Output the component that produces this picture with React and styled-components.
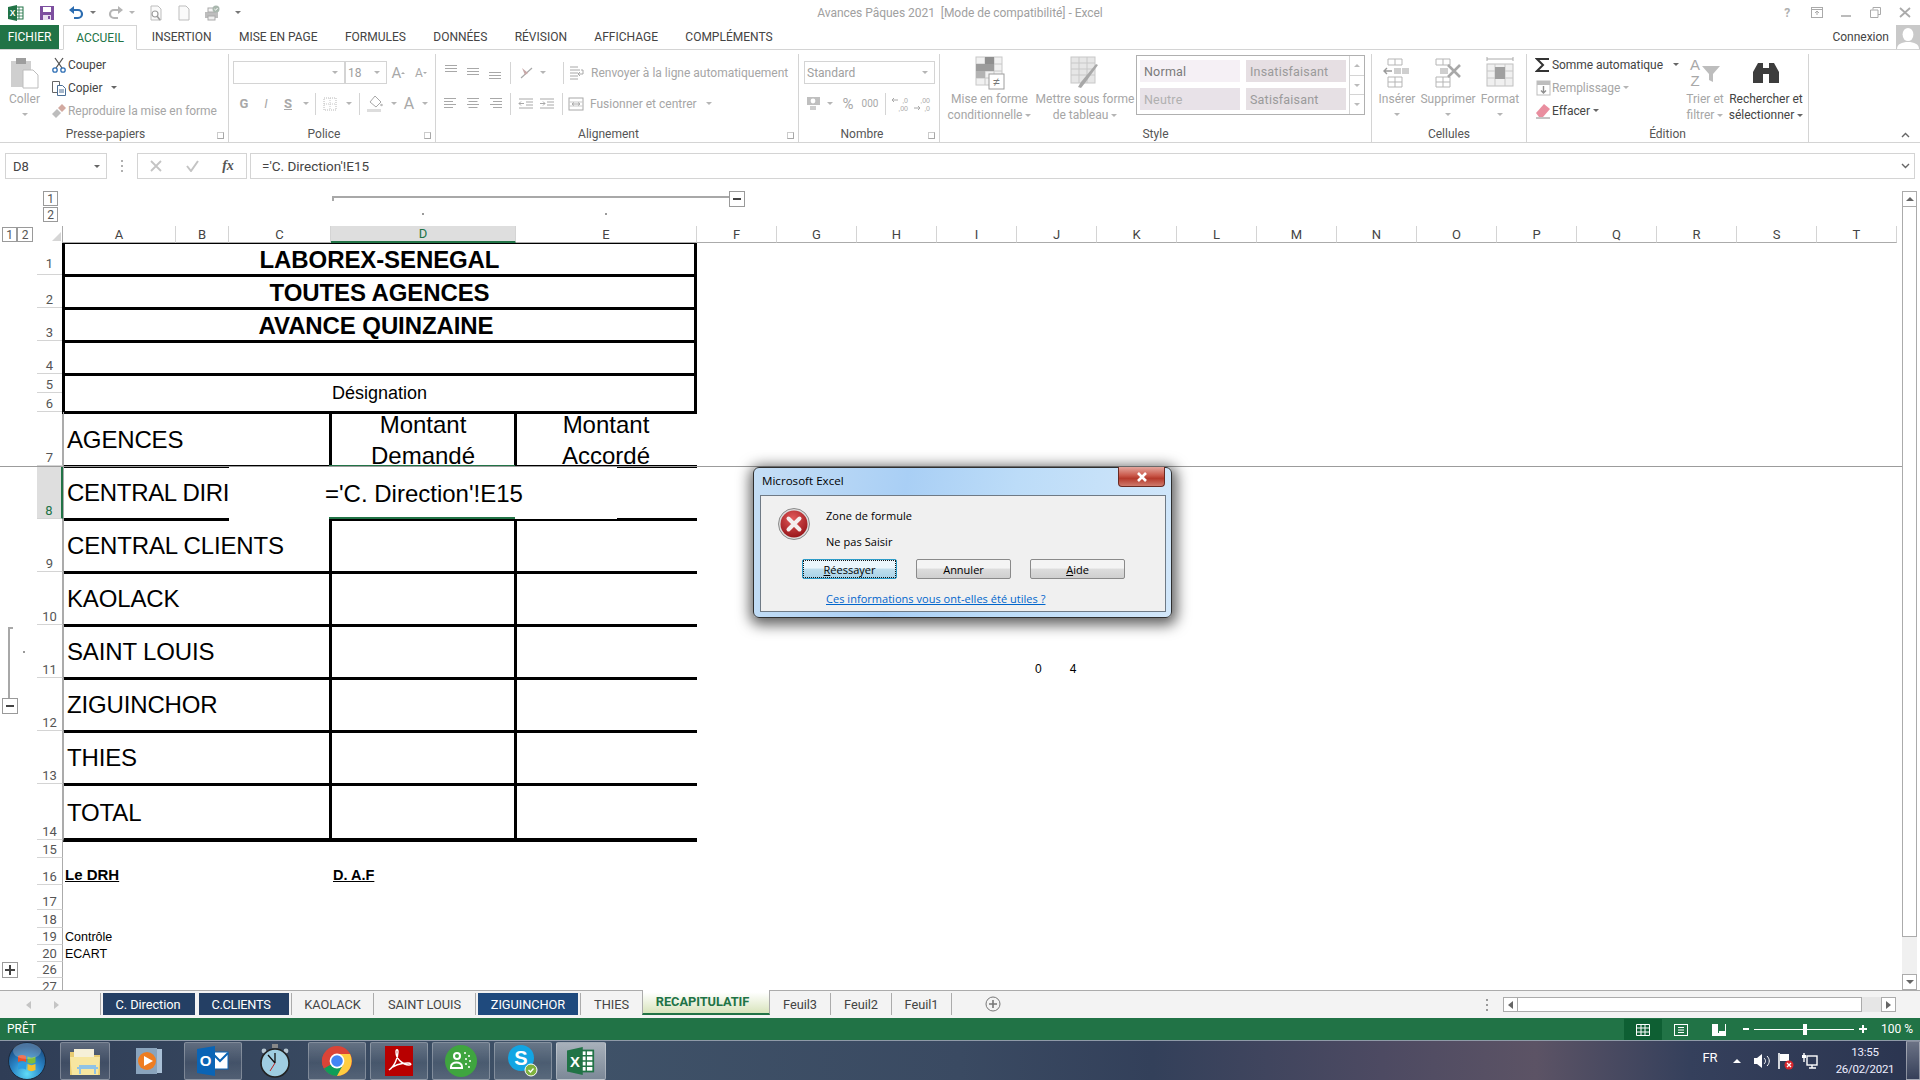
import React from 'react'
import styled, { createGlobalStyle } from 'styled-components'

const GREEN = '#217346'
const MUTED = '#a6a6a6'
const LINE = '#d4d4d4'

const Global = createGlobalStyle`
html,body{margin:0;padding:0;background:#fff;overflow:hidden;}
*{box-sizing:border-box;}
`

const Page = styled.div`
position:relative;
width:1920px;
height:1080px;
overflow:hidden;
display:flex;
flex-direction:column;
background:#fff;
font-family:Roboto,"Open Sans",sans-serif;
font-size:12px;
color:#444;
`

/* ---- title bar ---- */
const TitleBar = styled.div`
height:25px;
display:grid;
grid-template-columns:1fr auto 1fr;
align-items:center;
`
const Qat = styled.div`
display:flex;
align-items:center;
padding-left:7px;
`
const QatSlot = styled.span`
width:${p => p.$w}px;
display:flex;
justify-content:center;
align-items:center;
`
const WindowTitle = styled.div`
color:#a0a0a0;
font-size:12px;
letter-spacing:-.03px;
white-space:pre;
`
const WinBtns = styled.div`
display:flex;
justify-content:flex-end;
align-items:center;
`
const WinSlot = styled.span`
width:29.5px;
display:flex;
justify-content:center;
color:#b0b0b0;
font-weight:${p => (p.$b ? 700 : 400)};
`

/* ---- tabs ---- */
const TabBar = styled.div`
height:25px;
display:flex;
align-items:stretch;
border-bottom:1px solid ${LINE};
`
const FileTab = styled.div`
width:59px;
margin-right:4px;
background:${GREEN};
color:#fff;
display:flex;
align-items:center;
justify-content:center;
`
const RibbonTab = styled.div`
padding:0 13.7px;
display:flex;
align-items:center;
color:${p => (p.$active ? GREEN : '#444')};
white-space:nowrap;
${p => p.$active && `
  width:74px;
  padding:0;
  justify-content:center;
  margin-right:1px;
  border:1px solid ${LINE};
  border-bottom:1px solid #fff;
  height:25px;
`}
`
const Account = styled.div`
margin-left:auto;
display:flex;
align-items:center;
gap:7px;
color:#444;
`

/* ---- ribbon ---- */
const Ribbon = styled.div`
height:93px;
display:flex;
border-bottom:1px solid ${LINE};
position:relative;
`
const Group = styled.section`
width:${p => p.$w}px;
height:88px;
margin-top:4px;
position:relative;
display:flex;
flex-direction:column;
border-right:1px solid ${LINE};
`
const GroupBody = styled.div`
height:72px;
display:flex;
align-items:flex-start;
`
const GroupLabel = styled.div`
margin-top:auto;
height:16px;
line-height:16px;
text-align:center;
color:#555;
padding-right:${p => p.$pr || 0}px;
`
const Launcher = styled.span`
position:absolute;
right:4px;
bottom:3px;
width:7px;
height:7px;
border:1px solid #a8a8a8;
border-top-color:#ccc;
border-left-color:#ccc;
`
const BigBtn = styled.div`
width:${p => p.$w}px;
padding:2px 0 0 ${p => p.$pl || 0}px;
display:flex;
flex-direction:column;
align-items:center;
color:${p => (p.$on ? '#444' : MUTED)};
line-height:16px;
white-space:nowrap;
flex:none;
`
const BigIcon = styled.div`
height:33px;
margin-bottom:2px;
display:flex;
align-items:center;
justify-content:center;
`
const SmallCol = styled.div`
display:flex;
flex-direction:column;
margin-top:-1px;
padding-left:${p => p.$pl || 0}px;
flex:none;
width:${p => p.$w}px;
`
const SmallBtn = styled.div`
height:23px;
display:flex;
align-items:center;
white-space:nowrap;
letter-spacing:-.05px;
color:${p => (p.$on ? '#444' : MUTED)};
`
const SmallIcon = styled.span`
width:${p => p.$w || 19}px;
flex:none;
display:flex;
align-items:center;
justify-content:center;
`
const Caret = styled.i`
display:inline-block;
width:0;
height:0;
margin-left:${p => p.$ml ?? 3}px;
border-left:3px solid transparent;
border-right:3px solid transparent;
border-top:3px solid ${p => p.$c || '#b5b5b5'};
vertical-align:middle;
`
const BigCaret = styled(Caret)`
margin:6px 0 0;
`
const ToolRows = styled.div`
display:flex;
flex-direction:column;
padding:7px 0 0 ${p => p.$pl}px;
gap:8px;
`
const ToolRow = styled.div`
height:23px;
display:flex;
align-items:center;
white-space:nowrap;
color:${MUTED};
`
const ToolText = styled.span`
margin-left:6px;
font-size:12px;
`
const Slot = styled.span`
width:${p => p.$w}px;
flex:none;
height:22px;
display:flex;
align-items:center;
justify-content:center;
color:#a8a8a8;
font-size:${p => p.$fs || 12}px;
font-weight:${p => (p.$b ? 700 : 400)};
font-style:${p => (p.$i ? 'italic' : 'normal')};
text-decoration:${p => (p.$u ? 'underline' : 'none')};
`
const VSep = styled.span`
width:1px;
height:22px;
flex:none;
background:${LINE};
margin:0 ${p => p.$r ?? 4}px 0 ${p => p.$l ?? 4}px;
`
const Select = styled.div`
width:${p => p.$w}px;
height:23px;
border:1px solid ${LINE};
display:flex;
align-items:center;
justify-content:space-between;
padding:0 6px 0 2px;
color:#a0a0a0;
flex:none;
`
const Gallery = styled.div`
width:229px;
height:60px;
margin:1px 0 0 3px;
border:1px solid #b0b0b0;
display:flex;
flex:none;
`
const StyleGrid = styled.div`
flex:1;
display:grid;
grid-template-columns:100px 100px;
grid-template-rows:22px 22px;
gap:6px;
padding:4px 0 0 3px;
`
const StyleCell = styled.div`
background:${p => p.$bg};
color:${p => p.$c};
display:flex;
align-items:center;
padding-left:4px;
font-size:12.5px;
letter-spacing:.2px;
`
const GalleryArrows = styled.div`
width:15px;
margin-left:auto;
border-left:1px solid ${LINE};
display:flex;
flex-direction:column;
`
const GalleryArrow = styled.span`
flex:1;
display:flex;
align-items:center;
justify-content:center;
&+&{border-top:1px solid ${LINE};}
`
const Collapse = styled.span`
position:absolute;
right:10px;
bottom:4px;
color:#666;
display:flex;
`

/* ---- formula bar ---- */
const FormulaBar = styled.div`
height:37px;
padding:10px 0 0 5px;
display:flex;
align-items:flex-start;
`
const NameBox = styled.div`
width:102px;
height:26px;
border:1px solid ${LINE};
display:flex;
align-items:center;
justify-content:space-between;
padding:0 6px 0 7px;
font-size:13px;
`
const Grip = styled.div`
width:30px;
height:26px;
display:flex;
flex-direction:column;
align-items:center;
justify-content:center;
gap:3px;
span{width:2px;height:2px;background:#b0b0b0;}
`
const FxBox = styled.div`
width:110px;
height:26px;
border:1px solid ${LINE};
display:flex;
align-items:center;
`
const FxSlot = styled.span`
width:36px;
display:flex;
justify-content:center;
align-items:center;
`
const FxMark = styled(FxSlot)`
font-family:"Liberation Serif",serif;
font-style:italic;
font-size:14px;
font-weight:700;
color:#555;
`
const FormulaInput = styled.div`
flex:1;
height:26px;
margin:0 5px 0 3px;
border:1px solid ${LINE};
display:flex;
align-items:center;
justify-content:space-between;
padding:0 4px 0 11px;
font-size:13.5px;
`

/* ---- sheet ---- */
const SheetArea = styled.div`
position:relative;
height:810px;
display:flex;
overflow:hidden;
`
const colWidths = [37, 26, 113, 53, 102, 185, 181, ...Array(15).fill(80)]
const rowHeights = [32, 33, 33, 33, 19, 19, 54, 53, 53, 53, 53, 53, 53, 56, 18, 27, 25, 18, 17, 17, 16, 17]
const rowNames = [1, 2, 3, 4, 5, 6, 7, 8, 9, 10, 11, 12, 13, 14, 15, 16, 17, 18, 19, 20, 26, 27]
const colNames = 'ABCDEFGHIJKLMNOPQRST'.split('')

const Grid = styled.div`
width:1902px;
height:810px;
flex:none;
display:grid;
grid-template-columns:${colWidths.map(w => w + 'px').join(' ')} 1fr;
grid-template-rows:46px 17px ${rowHeights.map(h => h + 'px').join(' ')};
`
const ColHead = styled.div`
grid-row:2;
grid-column:${p => p.$col};
display:flex;
align-items:center;
justify-content:center;
font-size:13px;
color:${p => (p.$sel ? GREEN : '#444')};
background:${p => (p.$sel ? '#dedede' : '#fff')};
border-right:1px solid ${LINE};
border-bottom:${p => (p.$sel ? `2px solid ${GREEN}` : '1px solid #ababab')};
`
const Corner = styled.div`
grid-row:2;
grid-column:2;
display:flex;
align-items:flex-end;
justify-content:flex-end;
padding:0 1px 2px 0;
border-right:1px solid #ababab;
`
const RowHead = styled.div`
grid-row:${p => p.$row};
grid-column:2;
display:flex;
align-items:flex-end;
justify-content:center;
font-size:13px;
line-height:15px;
padding-bottom:${p => (p.$tall ? 3 : 0)}px;
overflow:hidden;
color:${p => (p.$sel ? GREEN : '#555')};
background:${p => (p.$sel ? '#dedede' : '#fff')};
border-bottom:1px solid ${LINE};
border-right:${p => (p.$sel ? `2px solid ${GREEN}` : '1px solid #ababab')};
`
const Banner = styled.div`
grid-row:${p => p.$row} / span ${p => p.$span || 1};
grid-column:3 / 8;
margin:0 0 -2px -1px;
border:3px solid #000;
border-top:${p => (p.$first ? '1px solid #000' : '0')};
display:flex;
align-items:center;
justify-content:center;
color:#000;
font-family:"Liberation Sans",Arial,sans-serif;
font-size:${p => (p.$small ? 18 : 24)}px;
font-weight:${p => (p.$small ? 400 : 700)};
letter-spacing:${p => (p.$small ? 0 : -0.1)}px;
padding:${p => (p.$pt ?? 1)}px ${p => p.$shift || 0}px 0 0;
z-index:1;
`
const LabelCell = styled.div`
grid-row:${p => p.$row};
grid-column:3 / ${p => p.$end || 6};
margin-bottom:-2px;
border-bottom:${p => p.$b || 3}px solid #000;
border-left:1px solid #ababab;
display:flex;
align-items:center;
padding:${p => p.$pt || 2}px 0 0 3px;
overflow:hidden;
white-space:nowrap;
color:#000;
font-family:"Liberation Sans",Arial,sans-serif;
font-size:24px;
letter-spacing:${p => p.$ls ?? -0.15}px;
z-index:1;
`
const ValueCell = styled.div`
grid-row:${p => p.$row};
grid-column:${p => p.$col};
margin:0 0 -2px -2px;
border-bottom:${p => p.$b || 3}px solid #000;
border-left:3px solid #000;
overflow:hidden;
display:flex;
align-items:center;
justify-content:center;
text-align:center;
color:#000;
font-family:"Liberation Sans",Arial,sans-serif;
font-size:24px;
line-height:31px;
padding:2px 2px 0 0;
z-index:1;
`
const TextCell = styled.div`
grid-row:${p => p.$row};
grid-column:${p => p.$col};
display:flex;
align-items:${p => (p.$low ? 'flex-end' : 'center')};
white-space:nowrap;
padding:${p => p.$pt || 0}px 0 ${p => (p.$low ? 2 : 0)}px ${p => p.$pl ?? 2}px;
color:#000;
font-family:"Liberation Sans",Arial,sans-serif;
font-size:${p => p.$fs || 12}px;
font-weight:${p => (p.$b ? 700 : 400)};
text-decoration:${p => (p.$b ? 'underline' : 'none')};
gap:${p => p.$gap || 0}px;
`
const EditBox = styled.div`
position:absolute;
left:229px;
top:286px;
width:388px;
height:53px;
background:#fff;
z-index:3;
display:flex;
align-items:center;
padding:2px 0 0 96px;
color:#000;
font-family:"Liberation Sans",Arial,sans-serif;
font-size:24px;
white-space:nowrap;
&::before,&::after{
  content:'';
  position:absolute;
  left:100px;
  width:186px;
  height:2px;
  background:${GREEN};
}
&::before{top:-1px;}
&::after{bottom:0;}
`
const FreezeLine = styled.div`
position:absolute;
left:0;
top:286px;
width:1902px;
height:1px;
background:#9c9c9c;
z-index:4;
`
const OutlineBtn = styled.div`
position:absolute;
left:${p => p.$x}px;
top:${p => p.$y}px;
width:${p => p.$w || 16}px;
height:${p => p.$h || 16}px;
border:1px solid #9a9a9a;
background:#fff;
display:flex;
align-items:center;
justify-content:center;
font-size:12px;
line-height:1;
color:#555;
z-index:2;
`
const OutlineBar = styled.div`
position:absolute;
left:${p => p.$x}px;
top:${p => p.$y}px;
width:${p => p.$w}px;
height:${p => p.$h}px;
background:#a8a8a8;
`
const OutlineDot = styled.div`
position:absolute;
left:${p => p.$x}px;
top:${p => p.$y}px;
width:2px;
height:2px;
background:#9a9a9a;
`
const VScroll = styled.div`
width:15px;
margin-top:11px;
flex:none;
display:flex;
flex-direction:column;
background:#f0f0f0;
`
const ScrollBtn = styled.div`
height:16px;
border:1px solid #ababab;
background:#fff;
display:flex;
align-items:center;
justify-content:center;
flex:none;
`
const VThumb = styled.div`
height:730px;
background:#fff;
border:1px solid #ababab;
border-top:0;
flex:none;
`
const VTrough = styled.div`
flex:1;
`

/* ---- sheet tabs ---- */
const TabsRow = styled.div`
height:28px;
background:#f3f3f3;
border-top:1px solid #ababab;
display:flex;
align-items:flex-start;
position:relative;
font-size:12.8px;
letter-spacing:-.05px;
`
const TabNav = styled.div`
width:100px;
height:27px;
display:flex;
align-items:center;
padding-left:26px;
gap:23px;
`
const SheetTab = styled.div`
width:${p => p.$w}px;
margin-left:${p => p.$ml || 0}px;
padding-right:${p => p.$pr || 0}px;
letter-spacing:${p => p.$ls ?? -0.05}px;
flex:none;
height:22px;
margin-top:2px;
display:flex;
align-items:center;
justify-content:center;
white-space:nowrap;
color:${p => (p.$navy ? '#fff' : '#444')};
background:${p => (p.$navy ? p.$navy : 'transparent')};
border-right:${p => (p.$sep ? '1px solid #ababab' : '0')};
`
const ActiveTab = styled.div`
width:128px;
height:25px;
margin-top:-1px;
padding-right:7px;
flex:none;
display:flex;
align-items:center;
justify-content:center;
font-weight:700;
color:${GREEN};
background:linear-gradient(#fff 10%,#d8e4bc);
border:1px solid #ababab;
border-top:0;
border-bottom:2px solid ${GREEN};
`
const LeadSep = styled.span`
width:1px;
height:22px;
margin:2px 0 0 ${p => p.$ml || 0}px;
background:#ababab;
flex:none;
`
const PlusSlot = styled.span`
margin:5px 0 0 33px;
display:flex;
`
const HScroll = styled.div`
margin:6px 24px 0 auto;
display:flex;
align-items:center;
`
const HDots = styled.div`
display:flex;
flex-direction:column;
gap:3px;
margin-right:15px;
span{width:2px;height:2px;background:#9a9a9a;}
`
const HBtn = styled.div`
width:15px;
height:15px;
background:#fff;
border:1px solid #ababab;
display:flex;
align-items:center;
justify-content:center;
flex:none;
`
const HThumb = styled.div`
width:344px;
height:15px;
background:#fff;
border:1px solid #ababab;
border-left:0;
`
const HTrough = styled.div`
width:19px;
height:15px;
background:#e6e6e6;
`

/* ---- status ---- */
const StatusBar = styled.div`
height:22px;
background:${GREEN};
color:#fff;
display:flex;
align-items:center;
padding-left:7px;
`
const StatusRight = styled.div`
margin-left:auto;
display:flex;
align-items:center;
height:22px;
`
const ViewBtn = styled.span`
width:38px;
height:22px;
margin:2px ${p => p.$mr || 0}px 0 0;
display:flex;
align-items:center;
justify-content:center;
background:${p => (p.$on ? '#0e5f33' : 'transparent')};
`
const ZoomTrack = styled.div`
width:100px;
height:1px;
background:#fff;
position:relative;
margin:0 4px;
`
const ZoomKnob = styled.span`
position:absolute;
left:49px;
top:-5px;
width:4px;
height:11px;
background:#fff;
`
const ZoomSign = styled.span`
width:${p => p.$w}px;
display:flex;
justify-content:center;
`
const ZoomValue = styled.span`
width:30px;
margin:0 9px 0 13px;
white-space:nowrap;
`

/* ---- taskbar ---- */
const Taskbar = styled.div`
height:40px;
border-top:1px solid #8f9aa8;
background:linear-gradient(90deg,#2f3d56 0,#3f5268 30%,#3a4a62 50%,#33405a 60%,#4d4a62 72%,#5c5365 80%,#35405c 88%,#2b3550 100%);
display:flex;
align-items:center;
color:#fff;
`
const OrbSlot = styled.div`
width:60px;
display:flex;
justify-content:center;
align-items:center;
flex:none;
padding-right:6px;
`
const TaskBtn = styled.div`
width:${p => p.$w || 58}px;
height:38px;
margin-right:${p => p.$mr ?? 4}px;
flex:none;
display:flex;
align-items:center;
justify-content:center;
border-radius:2px;
${p => p.$on && `
  border:1px solid rgba(255,255,255,.28);
  background:linear-gradient(rgba(255,255,255,.22),rgba(255,255,255,.07) 55%,rgba(255,255,255,.14));
`}
${p => p.$front && `
  background:linear-gradient(rgba(255,255,255,.55),rgba(255,255,255,.32));
`}
`
const Tray = styled.div`
margin-left:auto;
display:flex;
align-items:center;
height:39px;
`
const TrayText = styled.span`
font-size:13px;
width:20px;
margin-right:4px;
text-align:center;
margin-top:-6px;
`
const TraySlot = styled.span`
width:${p => p.$w || 24}px;
display:flex;
justify-content:center;
align-items:center;
`
const TrayClock = styled.div`
width:78px;
margin-left:4px;
text-align:center;
font-size:11.5px;
line-height:17px;
letter-spacing:-.25px;
color:#eef;
`
const ShowDesk = styled.div`
width:14px;
height:39px;
margin-left:2px;
border:1px solid rgba(255,255,255,.4);
background:linear-gradient(rgba(255,255,255,.3),rgba(255,255,255,.05));
`

/* ---- dialog ---- */
const Dialog = styled.div`
position:absolute;
left:753px;
top:467px;
width:419px;
height:151px;
z-index:10;
border:1px solid #2f2f2f;
border-radius:6px;
background:linear-gradient(100deg,#c5def5 0,#a9cff5 35%,#bcdcf8 60%,#d2e7fa 100%);
box-shadow:1px 3px 14px 4px rgba(0,0,0,.62);
padding:0 5px 5px 6px;
display:flex;
flex-direction:column;
font-family:"Open Sans",sans-serif;
font-size:11px;
color:#000;
`
const DialogTitle = styled.div`
height:27px;
display:flex;
align-items:center;
font-size:11.6px;
padding:0 0 2px 2px;
`
const CloseBtn = styled.div`
position:absolute;
right:6px;
top:-1px;
width:47px;
height:20px;
border:1px solid #6a2a22;
border-top:0;
border-radius:0 0 4px 4px;
background:linear-gradient(#e5a79e,#c9584a 45%,#b53a2c 60%,#cf7a6c);
display:flex;
align-items:center;
justify-content:center;
`
const DialogPanel = styled.div`
flex:1;
border:1px solid #6f7a85;
background:#f0f0f0;
`
const Message = styled.div`
display:flex;
padding:12px 0 0 17px;
gap:16px;
`
const MsgText = styled.div`
display:flex;
flex-direction:column;
gap:10px;
line-height:16px;
letter-spacing:.06px;
`
const DialogButtons = styled.div`
display:flex;
gap:19px;
padding:9px 0 0 41px;
`
const DlgBtn = styled.div`
width:95px;
height:20px;
border:1px solid ${p => (p.$main ? '#2e9cc8' : '#8a8a8a')};
border-radius:2px;
background:${p => (p.$main ? 'linear-gradient(#eaf6fc 45%,#bfdfee 50%,#a9d3e8)' : 'linear-gradient(#f4f4f4 45%,#dddddd 50%,#cfcfcf)')};
display:flex;
align-items:center;
justify-content:center;
color:#000;
${p => p.$main && 'outline:1px dotted #111;outline-offset:-2px;'}
u{text-decoration:underline;}
`
const HelpLink = styled.div`
padding:12px 0 0 65px;
line-height:16px;
color:#0066cc;
text-decoration:underline;
letter-spacing:.03px;
`

/* ---- drawings ---- */
const Svg = ({ w = 16, h = 16, vb, children }) => (
  <svg width={w} height={h} viewBox={vb || `0 0 ${w} ${h}`} style={{ display: 'block', flex: 'none' }}>{children}</svg>
)
const XlLogo = ({ w = 16, h = 16 }) => (
  <Svg w={w} h={h} vb="0 0 16 16">
    <rect x="7" y="2" width="8" height="12" fill="#fff" stroke="#217346" />
    <path d="M7 5h8M7 8h8M7 11h8M11 2v12" stroke="#217346" strokeWidth=".8" />
    <path d="M0 2l9-2v16l-9-2z" fill="#217346" />
    <text x="4.6" y="11.4" fontSize="8.5" fontWeight="700" fill="#fff" textAnchor="middle" fontFamily="Liberation Sans">X</text>
  </Svg>
)
const Floppy = () => (
  <Svg>
    <path d="M1 1h14v14H1z" fill="#7d4f9f" />
    <rect x="4" y="2" width="8" height="5" fill="#fff" />
    <rect x="4" y="10" width="8" height="5" fill="#e9dff0" />
    <rect x="9" y="11" width="2" height="3" fill="#7d4f9f" />
  </Svg>
)
const UndoArrow = ({ c, flip }) => (
  <Svg>
    <g transform={flip ? 'matrix(-1 0 0 1 16 0)' : undefined}>
      <path d="M4 5h6a4 4 0 0 1 0 8H6" fill="none" stroke={c} strokeWidth="2.2" />
      <path d="M6 1v8L1 5z" fill={c} />
    </g>
  </Svg>
)
const DocGray = ({ lens }) => (
  <Svg>
    <path d="M3 1h7l3 3v11H3z" fill="#fafafa" stroke="#bdbdbd" />
    {lens && <><circle cx="7" cy="9" r="3" fill="#fff" stroke="#9c9c9c" strokeWidth="1.2" /><path d="M9 11l3 4" stroke="#9c9c9c" strokeWidth="1.6" /></>}
  </Svg>
)
const Printer = () => (
  <Svg w={17} h={16}>
    <rect x="1" y="7" width="13" height="6" fill="#bdbdbd" />
    <rect x="4" y="11" width="7" height="4" fill="#eee" stroke="#aaa" />
    <rect x="4" y="3" width="7" height="4" fill="#f3f3f3" stroke="#aaa" />
    <circle cx="12" cy="4" r="3.5" fill="#a9b7ae" />
    <path d="M10.4 4l1.2 1.2 2-2.2" fill="none" stroke="#fff" strokeWidth="1" />
  </Svg>
)
const Avatar = () => (
  <Svg w={24} h={24}>
    <rect width="24" height="24" fill="#c9c9c9" />
    <ellipse cx="12" cy="9.5" rx="5.4" ry="6.6" fill="#fff" />
    <path d="M1 24c0-5 5-7 11-7s11 2 11 7z" fill="#fff" />
  </Svg>
)
const Paste = () => (
  <Svg w={30} h={32}>
    <rect x="1" y="4" width="20" height="26" fill="#cfcfcf" />
    <rect x="6" y="1" width="10" height="6" fill="#9e9e9e" />
    <path d="M13 13h10l5 5v13H13z" fill="#fff" stroke="#bdbdbd" />
  </Svg>
)
const Scissors = () => (
  <Svg>
    <path d="M4 1l7 10M12 1L5 11" stroke="#555" strokeWidth="1.3" />
    <circle cx="4" cy="13" r="2.2" fill="none" stroke="#2f6fb5" strokeWidth="1.3" />
    <circle cx="12" cy="13" r="2.2" fill="none" stroke="#2f6fb5" strokeWidth="1.3" />
  </Svg>
)
const CopyDoc = () => (
  <Svg>
    <path d="M1.5 1.5h7v11h-7z" fill="#fff" stroke="#666" />
    <path d="M6.5 5.5h5l3 3v7h-8z" fill="#fff" stroke="#4a6f96" />
    <path d="M8 10h5M8 12h5" stroke="#4a6f96" />
  </Svg>
)
const Brush = () => (
  <Svg>
    <path d="M1 11l5-5 4 4-5 5z" fill="#bdbdbd" />
    <path d="M7 5l4-4 4 4-4 4z" fill="#d2a9a0" />
  </Svg>
)
const Lines = ({ align = 'left' }) => {
  const ws = [12, 9, 12, 9]
  const x = w => (align === 'left' ? 1 : align === 'right' ? 15 - w : 8 - w / 2)
  return (
    <Svg w={16} h={16}>
      {ws.map((w, i) => <rect key={i} x={x(w)} y={2 + i * 3} width={w} height="1" fill="#a8a8a8" />)}
    </Svg>
  )
}
const VLines = ({ top }) => (
  <Svg w={16} h={20}>
    {[0, 1, 2].map(i => <rect key={i} x="2" y={top + i * 3} width="12" height="1" fill="#a8a8a8" />)}
  </Svg>
)
const Orient = () => (
  <Svg>
    <path d="M2 13L13 3" stroke="#a8a8a8" strokeWidth="1.2" />
    <path d="M3 3l6 5-3 2z" fill="#c8a9a9" />
  </Svg>
)
const Wrap = () => (
  <Svg>
    <path d="M1 2h8M1 5h10M1 8h8M1 11h8M1 14h8" stroke="#a8a8a8" />
    <path d="M12 5h2v4h-4M11 7l-2 2 2 2" fill="none" stroke="#a8a8a8" />
  </Svg>
)
const Merge = () => (
  <Svg>
    <rect x="1" y="2" width="14" height="12" fill="#fff" stroke="#a8a8a8" />
    <path d="M1 6h14M1 10h14" stroke="#c9c9c9" />
    <path d="M4 8h8M4 8l2-1.5M4 8l2 1.5M12 8l-2-1.5M12 8l-2 1.5" stroke="#a8a8a8" />
  </Svg>
)
const Indent = ({ rev }) => (
  <Svg>
    <path d="M1 3h14M8 6h7M8 9h7M1 12h14" stroke="#a8a8a8" />
    <path d={rev ? 'M6 7.5H1M3 5.5l-2 2 2 2' : 'M1 7.5h5M4 5.5l2 2-2 2'} fill="none" stroke="#a8a8a8" />
  </Svg>
)
const Borders = () => (
  <Svg>
    <rect x="2" y="2" width="12" height="12" fill="none" stroke="#b8b8b8" strokeDasharray="1 1" />
    <path d="M8 2v12M2 8h12" stroke="#c8c8c8" strokeDasharray="1 1" />
  </Svg>
)
const Fill = () => (
  <Svg w={18} h={18}>
    <path d="M9 1l6 6-5 5-6-5z" fill="#fff" stroke="#a8a8a8" />
    <rect x="1" y="14" width="14" height="3" fill="#ddd" />
    <circle cx="15.5" cy="10" r="1.3" fill="#bbb" />
  </Svg>
)
const Money = () => (
  <Svg>
    <rect x="1" y="1" width="13" height="8" fill="#bfbfbf" />
    <circle cx="7" cy="5" r="2.4" fill="#fff" />
    <path d="M4 11h6M4 13h6" stroke="#bdbdbd" strokeWidth="1.4" />
  </Svg>
)
const Decimals = ({ less }) => (
  <Svg w={18} h={16}>
    <text x="17" y="7" fontSize="7" fill="#a8a8a8" textAnchor="end" fontFamily="Liberation Sans">{less ? ',00' : ',0'}</text>
    <text x="17" y="15" fontSize="7" fill="#a8a8a8" textAnchor="end" fontFamily="Liberation Sans">{less ? ',0' : ',00'}</text>
    <path d={less ? 'M1 12h6M5 10l2 2-2 2' : 'M7 4H1M3 2L1 4l2 2'} fill="none" stroke="#a8a8a8" />
  </Svg>
)
const CondFormat = () => (
  <Svg w={30} h={34}>
    <rect x="1" y="1" width="26" height="28" fill="#f1f1f1" stroke="#c8c8c8" />
    <path d="M1 8h26M1 15h26M1 22h26M10 1v28M19 1v28" stroke="#c8c8c8" />
    <rect x="10" y="1" width="9" height="7" fill="#8f8f8f" />
    <rect x="1" y="8" width="18" height="7" fill="#9c9c9c" />
    <rect x="1" y="15" width="9" height="7" fill="#b3b3b3" />
    <rect x="14" y="18" width="15" height="15" fill="#fff" stroke="#9e9e9e" />
    <text x="21.5" y="30" fontSize="12" fill="#777" textAnchor="middle" fontFamily="Liberation Sans">≠</text>
  </Svg>
)
const TableBrush = () => (
  <Svg w={30} h={34}>
    <rect x="1" y="1" width="24" height="26" fill="#e6e6e6" stroke="#c8c8c8" />
    <path d="M1 7h24M1 13h24M1 19h24M9 1v26M17 1v26" stroke="#c8c8c8" />
    <path d="M28 9L15 27l-4 5-3-1 3-5 15-18z" fill="#a8a8a8" />
  </Svg>
)
const CellInsert = () => (
  <Svg w={30} h={32}>
    <path d="M6 2h14v6H6zM13 2v6M6 20h14v10H6zM13 20v10M6 25h14" fill="#fff" stroke="#b5b5b5" />
    <path d="M2 14h8M5 11l-3 3 3 3" fill="none" stroke="#9a9a9a" strokeWidth="1.4" />
    <rect x="12" y="11" width="7" height="6" fill="#cfcfcf" /><rect x="20" y="11" width="7" height="6" fill="#cfcfcf" />
  </Svg>
)
const CellDelete = () => (
  <Svg w={32} h={32}>
    <path d="M4 2h14v6H4zM11 2v6M4 20h14v10H4zM11 20v10M4 25h14" fill="#fff" stroke="#b5b5b5" />
    <rect x="8" y="11" width="8" height="6" fill="#cfcfcf" />
    <path d="M16 8l12 12M28 8L16 20" stroke="#a8a8a8" strokeWidth="2.6" />
  </Svg>
)
const CellFormat = () => (
  <Svg w={30} h={34}>
    <path d="M2 3h26M2 1v4M28 1v4" stroke="#aaa" />
    <rect x="2" y="8" width="26" height="22" fill="#f0f0f0" stroke="#c0c0c0" />
    <path d="M2 15h26M2 22h26M10 8v22M20 8v22" stroke="#c8c8c8" />
    <rect x="10" y="11" width="10" height="12" fill="#9f9f9f" />
  </Svg>
)
const Sigma = () => (
  <Svg>
    <path d="M14 2H2l6 6-6 6h12" fill="none" stroke="#333" strokeWidth="2" />
  </Svg>
)
const FillDown = () => (
  <Svg>
    <rect x="2" y="1" width="13" height="14" fill="#fff" stroke="#bdbdbd" />
    <rect x="2" y="1" width="13" height="4" fill="#bdbdbd" />
    <path d="M8.5 6v7M6 10.5l2.5 2.5 2.5-2.5" fill="none" stroke="#8f8f8f" strokeWidth="1.4" />
  </Svg>
)
const Eraser = () => (
  <Svg>
    <path d="M9 1l6 5-7 8H4L1 10z" fill="#e98e9f" />
    <path d="M1 15h14" stroke="#888" />
  </Svg>
)
const SortFilter = () => (
  <Svg w={34} h={32}>
    <text x="7" y="13" fontSize="15" fill="#a8a8a8" textAnchor="middle" fontFamily="Liberation Sans">A</text>
    <text x="7" y="29" fontSize="15" fill="#a8a8a8" textAnchor="middle" fontFamily="Liberation Sans">Z</text>
    <path d="M14 9h18l-7 8v8l-4-2v-6z" fill="#bdbdbd" />
  </Svg>
)
const Binoculars = () => (
  <Svg w={28} h={28}>
    <path d="M6 4h5v20H1V13zM22 4h-5v20h10V13z" fill="#3d3d3d" />
    <rect x="11" y="9" width="6" height="6" fill="#3d3d3d" />
  </Svg>
)
const Tri = ({ dir = 'up', c = '#777', s = 3 }) => {
  const d = { up: `M0 ${s}L${s} 0L${2 * s} ${s}z`, down: `M0 0L${2 * s} 0L${s} ${s}z` }
  return <Svg w={2 * s} h={s}><path d={d[dir]} fill={c} /></Svg>
}
const TriSide = ({ left, c = '#666' }) => (
  <Svg w={5} h={8}><path d={left ? 'M5 0v8L0 4z' : 'M0 0v8l5-4z'} fill={c} /></Svg>
)
const Chevron = ({ up }) => (
  <Svg w={9} h={6}><path d={up ? 'M1 5l3.5-3.5L8 5' : 'M1 1l3.5 3.5L8 1'} fill="none" stroke="#666" strokeWidth="1.4" /></Svg>
)
const ErrorBadge = () => (
  <Svg w={32} h={32}>
    <defs>
      <radialGradient id="errG" cx=".45" cy=".3" r=".8"><stop offset="0" stopColor="#e25a5a" /><stop offset="1" stopColor="#8f0d12" /></radialGradient>
    </defs>
    <circle cx="16" cy="16" r="15.5" fill="#ddd" stroke="#8a8a8a" />
    <circle cx="16" cy="16" r="13.5" fill="url(#errG)" />
    <path d="M10.5 10.5l11 11M21.5 10.5l-11 11" stroke="#f4eeee" strokeWidth="4" strokeLinecap="round" />
  </Svg>
)
const Orb = () => (
  <Svg w={38} h={38}>
    <defs>
      <radialGradient id="orbG" cx=".5" cy=".85" r=".75"><stop offset="0" stopColor="#5fdcf8" /><stop offset=".55" stopColor="#2a86c8" /><stop offset="1" stopColor="#1a4f86" /></radialGradient>
    </defs>
    <circle cx="19" cy="19" r="18.5" fill="url(#orbG)" stroke="#1b2a3d" />
    <path d="M10 14c3-1.5 5-1.5 8 0v6c-3-1.5-5-1.5-8 0z" fill="#e8502b" />
    <path d="M19.5 14.5c3 1.5 5 1.5 8 0v6c-3 1.5-5 1.5-8 0z" fill="#7fbe3a" />
    <path d="M10 21.5c3-1.5 5-1.5 8 0v6c-3-1.5-5-1.5-8 0z" fill="#2b9ce0" />
    <path d="M19.5 22c3 1.5 5 1.5 8 0v6c-3 1.5-5 1.5-8 0z" fill="#f5c02c" />
    <ellipse cx="19" cy="9" rx="14" ry="8" fill="#fff" opacity=".22" />
  </Svg>
)
const Folder = () => (
  <Svg w={34} h={34}>
    <path d="M2 8h11l3 3h16v20H2z" fill="#e9cc72" />
    <rect x="6" y="5" width="20" height="10" fill="#f6f0d8" />
    <path d="M2 13h30l-2 18H4z" fill="#f7e6a0" />
    <path d="M12 30v-8h15v8M9 24h21" fill="none" stroke="#8fc3e6" strokeWidth="2" />
  </Svg>
)
const MediaPlay = () => (
  <Svg w={28} h={30}>
    <rect x="7" y="3" width="20" height="24" fill="#a9c0d6" />
    <rect x="1" y="2" width="21" height="26" fill="#8aa4bd" />
    <circle cx="12" cy="15" r="9" fill="#ee7d22" />
    <path d="M9 10l9 5-9 5z" fill="#fff" />
  </Svg>
)
const Outlook = () => (
  <Svg w={32} h={30}>
    <rect x="15" y="6" width="16" height="17" fill="#fff" stroke="#0a64b5" />
    <path d="M15 7l8 8 8-8" fill="none" stroke="#0a64b5" strokeWidth="2" />
    <path d="M0 3l18-3v30L0 27z" fill="#0a64b5" />
    <text x="8.5" y="20" fontSize="15" fontWeight="700" fill="#fff" textAnchor="middle" fontFamily="Liberation Sans">O</text>
  </Svg>
)
const Stopwatch = () => (
  <Svg w={30} h={34}>
    <rect x="12" y="0" width="6" height="4" fill="#888" />
    <circle cx="4" cy="7" r="2.4" fill="#b4c4cf" /><circle cx="26" cy="7" r="2.4" fill="#b4c4cf" />
    <circle cx="15" cy="19" r="14" fill="#9fcde0" stroke="#222" strokeWidth="1.6" />
    <path d="M15 19V9M15 19L8 11" stroke="#111" strokeWidth="1.3" />
    <path d="M15 19l-5 8" stroke="#b22" />
  </Svg>
)
const Chrome = () => (
  <Svg w={32} h={32}>
    <circle cx="16" cy="16" r="15" fill="#db4437" />
    <path d="M16 16L3 23.5A15 15 0 0 1 3 8.5z" fill="#db4437" />
    <path d="M16 16L3 23.5A15 15 0 0 0 16 31l7.5-13z" fill="#0f9d58" />
    <path d="M16 9h13a15 15 0 0 1-13 22l7-13z" fill="#ffcd40" />
    <circle cx="16" cy="16" r="7.4" fill="#fff" />
    <circle cx="16" cy="16" r="5.8" fill="#4285f4" />
  </Svg>
)
const Acrobat = () => (
  <Svg w={30} h={32}>
    <rect x="1" y="1" width="28" height="30" fill="#b80000" />
    <path d="M5 25c5-3 9-12 9-18 0-3-2-3-2 0 0 7 7 13 13 13 3 0 2-2-1-2-6 0-14 2-19 7z" fill="none" stroke="#fff" strokeWidth="1.4" />
  </Svg>
)
const Lync = () => (
  <Svg w={32} h={32}>
    <circle cx="16" cy="16" r="16" fill="#3fa53f" />
    <circle cx="12" cy="11" r="3" fill="none" stroke="#fff" strokeWidth="2" />
    <path d="M6 22c0-6 11-6 11 0v1H6z" fill="none" stroke="#fff" strokeWidth="2" />
    {[[20, 8], [24, 11], [21, 14], [25, 16], [21, 19], [24, 22]].map(([x, y]) => <circle key={x + '' + y} cx={x} cy={y} r="1" fill="#fff" />)}
  </Svg>
)
const Skype = () => (
  <Svg w={32} h={34}>
    <circle cx="14" cy="14" r="13" fill="#12a5e3" />
    <text x="14" y="21" fontSize="20" fontWeight="700" fill="#fff" textAnchor="middle" fontFamily="Liberation Sans">S</text>
    <circle cx="24" cy="26" r="6" fill="#7fb23f" stroke="#fff" />
    <path d="M21.5 26l2 2 3-3.5" fill="none" stroke="#fff" strokeWidth="1.3" />
  </Svg>
)
const SpeakerIcon = () => (
  <Svg w={18} h={16}>
    <path d="M1 5h3l5-4v14l-5-4H1z" fill="#fff" />
    <path d="M11 5c2 2 2 4 0 6M14 3c3 3 3 7 0 10" fill="none" stroke="#fff" />
  </Svg>
)
const FlagIcon = () => (
  <Svg w={16} h={18}>
    <path d="M1 1v16" stroke="#fff" strokeWidth="1.6" />
    <path d="M2 2h9v7H2z" fill="#fff" />
    <circle cx="11" cy="13" r="4.5" fill="#d8262c" />
    <path d="M9 11l4 4M13 11l-4 4" stroke="#fff" strokeWidth="1.3" />
  </Svg>
)
const NetIcon = () => (
  <Svg w={16} h={18}>
    <rect x="5" y="4" width="10" height="9" fill="none" stroke="#fff" strokeWidth="1.4" />
    <path d="M2 1v9M7 16h7M10 13v3" stroke="#fff" strokeWidth="1.4" />
    <rect x="0" y="3" width="4" height="3" fill="#fff" />
  </Svg>
)
const PlusCircle = () => (
  <Svg>
    <circle cx="8" cy="8" r="7" fill="none" stroke="#777" />
    <path d="M8 4v8M4 8h8" stroke="#777" strokeWidth="1.6" />
  </Svg>
)
const ViewIcon = ({ kind }) => (
  <Svg>
    {kind === 'grid' && <path d="M1.5 2.5h13v11h-13zM1.5 6h13M1.5 10h13M6 2.5v11M10 2.5v11" fill="none" stroke="#fff" />}
    {kind === 'page' && <><rect x="1.5" y="2.5" width="13" height="11" fill="none" stroke="#fff" /><path d="M5 5.5h6M5 8h6M5 10.5h6" stroke="#fff" /></>}
    {kind === 'break' && <><rect x="1" y="2" width="14" height="12" fill="#fff" /><rect x="7" y="2" width="1" height="9" fill={GREEN} /><rect x="8" y="2" width="6" height="7" fill={GREEN} /></>}
  </Svg>
)

const agencies = ['CENTRAL CLIENTS', 'KAOLACK', 'SAINT LOUIS', 'ZIGUINCHOR', 'THIES']

const App = () => {
  const gridRow = n => n + 2
  return (
    <Page>
      <Global />
      <TitleBar>
        <Qat>
          <QatSlot $w={18}><XlLogo /></QatSlot>
          <QatSlot $w={44}><Floppy /></QatSlot>
          <QatSlot $w={14}><UndoArrow c="#2b6cb0" /></QatSlot>
          <QatSlot $w={19}><Caret $ml={0} $c="#777" /></QatSlot>
          <QatSlot $w={28}><UndoArrow c="#b5b5b5" flip /></QatSlot>
          <QatSlot $w={4}><Caret $ml={0} /></QatSlot>
          <QatSlot $w={44}><DocGray lens /></QatSlot>
          <QatSlot $w={12}><DocGray /></QatSlot>
          <QatSlot $w={44}><Printer /></QatSlot>
          <QatSlot $w={8}><Caret $ml={0} $c="#777" /></QatSlot>
        </Qat>
        <WindowTitle>Avances Pâques 2021  [Mode de compatibilité] - Excel</WindowTitle>
        <WinBtns>
          <WinSlot $b>?</WinSlot>
          <WinSlot>
            <Svg w={12} h={11}><rect x=".5" y=".5" width="11" height="10" fill="none" stroke="#aaa" /><path d="M.5 2.5h11M6 8V4M4 6l2-2 2 2" fill="none" stroke="#aaa" /></Svg>
          </WinSlot>
          <WinSlot><Svg w={10} h={11}><rect x="0" y="8" width="10" height="2" fill="#bbb" /></Svg></WinSlot>
          <WinSlot><Svg w={11} h={11}><path d="M3 2.5V.5h7.5v7H8M.5 3h7.5v7.5H.5z" fill="none" stroke="#aaa" /></Svg></WinSlot>
          <WinSlot><Svg w={12} h={11}><path d="M1 1l10 9M11 1L1 10" stroke="#aaa" strokeWidth="1.8" /></Svg></WinSlot>
        </WinBtns>
      </TitleBar>

      <TabBar>
        <FileTab>FICHIER</FileTab>
        <RibbonTab $active>ACCUEIL</RibbonTab>
        <RibbonTab>INSERTION</RibbonTab>
        <RibbonTab>MISE EN PAGE</RibbonTab>
        <RibbonTab>FORMULES</RibbonTab>
        <RibbonTab>DONNÉES</RibbonTab>
        <RibbonTab>RÉVISION</RibbonTab>
        <RibbonTab>AFFICHAGE</RibbonTab>
        <RibbonTab>COMPLÉMENTS</RibbonTab>
        <Account>Connexion<Avatar /></Account>
      </TabBar>

      <Ribbon>
        <Group $w={229}>
          <GroupBody>
            <BigBtn $w={49}>
              <BigIcon><Paste /></BigIcon>
              <span>Coller</span>
              <BigCaret />
            </BigBtn>
            <SmallCol $w={170}>
              <SmallBtn $on><SmallIcon><Scissors /></SmallIcon>Couper</SmallBtn>
              <SmallBtn $on><SmallIcon><CopyDoc /></SmallIcon>Copier<Caret $ml={9} $c="#666" /></SmallBtn>
              <SmallBtn><SmallIcon><Brush /></SmallIcon>Reproduire la mise en forme</SmallBtn>
            </SmallCol>
          </GroupBody>
          <GroupLabel $pr={17}>Presse-papiers</GroupLabel>
          <Launcher />
        </Group>

        <Group $w={207}>
          <ToolRows $pl={4}>
            <ToolRow>
              <Select $w={112}><span /><Caret $ml={0} /></Select>
              <Select $w={42}>18<Caret $ml={0} /></Select>
              <Slot $w={23} $fs={15}>A<Tri dir="up" c="#aaa" s={2} /></Slot>
              <Slot $w={22} $fs={12}>A<Tri dir="down" c="#aaa" s={2} /></Slot>
            </ToolRow>
            <ToolRow>
              <Slot $w={22} $fs={13} $b>G</Slot>
              <Slot $w={22} $fs={13} $i>I</Slot>
              <Slot $w={22} $fs={13} $b $u>S</Slot>
              <Slot $w={14}><Caret $ml={0} /></Slot>
              <VSep $l={2} $r={1} />
              <Slot $w={26}><Borders /></Slot>
              <Slot $w={12}><Caret $ml={0} /></Slot>
              <VSep $l={4} $r={0} />
              <Slot $w={30}><Fill /></Slot>
              <Slot $w={8}><Caret $ml={0} /></Slot>
              <Slot $w={22} $fs={16}>A</Slot>
              <Slot $w={10}><Caret $ml={0} /></Slot>
            </ToolRow>
          </ToolRows>
          <GroupLabel $pr={16}>Police</GroupLabel>
          <Launcher />
        </Group>

        <Group $w={363}>
          <ToolRows $pl={4}>
            <ToolRow>
              <Slot $w={22}><VLines top={2} /></Slot>
              <Slot $w={22}><VLines top={5} /></Slot>
              <Slot $w={22}><VLines top={9} /></Slot>
              <VSep />
              <Slot $w={24}><Orient /></Slot>
              <Slot $w={8}><Caret $ml={0} /></Slot>
              <VSep $l={16} $r={5} />
              <Slot $w={16}><Wrap /></Slot>
              <ToolText>Renvoyer à la ligne automatiquement</ToolText>
            </ToolRow>
            <ToolRow>
              <Slot $w={22}><Lines align="left" /></Slot>
              <Slot $w={22}><Lines align="center" /></Slot>
              <Slot $w={22}><Lines align="right" /></Slot>
              <VSep />
              <Slot $w={22}><Indent rev /></Slot>
              <Slot $w={20}><Indent /></Slot>
              <VSep $l={5} $r={5} />
              <Slot $w={16}><Merge /></Slot>
              <ToolText>Fusionner et centrer</ToolText>
              <Caret $ml={9} />
            </ToolRow>
          </ToolRows>
          <GroupLabel $pr={17}>Alignement</GroupLabel>
          <Launcher />
        </Group>

        <Group $w={141}>
          <ToolRows $pl={5}>
            <ToolRow><Select $w={131}>Standard<Caret $ml={0} /></Select></ToolRow>
            <ToolRow>
              <Slot $w={20}><Money /></Slot>
              <Slot $w={12}><Caret $ml={0} /></Slot>
              <Slot $w={24} $fs={15}>%</Slot>
              <Slot $w={20} $fs={10}>000</Slot>
              <VSep $l={5} $r={3} />
              <Slot $w={22}><Decimals /></Slot>
              <Slot $w={22}><Decimals less /></Slot>
            </ToolRow>
          </ToolRows>
          <GroupLabel $pr={14}>Nombre</GroupLabel>
          <Launcher />
        </Group>

        <Group $w={432}>
          <GroupBody>
            <BigBtn $w={97} $pl={2}>
              <BigIcon><CondFormat /></BigIcon>
              <span>Mise en forme</span>
              <span>conditionnelle<Caret /></span>
            </BigBtn>
            <BigBtn $w={96}>
              <BigIcon><TableBrush /></BigIcon>
              <span>Mettre sous forme</span>
              <span>de tableau<Caret /></span>
            </BigBtn>
            <Gallery>
              <StyleGrid>
                <StyleCell $bg="#f5f0f5" $c="#7a7a7a">Normal</StyleCell>
                <StyleCell $bg="#e6dfe3" $c="#9a9a9a">Insatisfaisant</StyleCell>
                <StyleCell $bg="#e8e2e8" $c="#b0b0b0">Neutre</StyleCell>
                <StyleCell $bg="#e6e0e4" $c="#9a9a9a">Satisfaisant</StyleCell>
              </StyleGrid>
              <GalleryArrows>
                <GalleryArrow><Tri dir="up" c="#bbb" /></GalleryArrow>
                <GalleryArrow><Tri dir="down" c="#bbb" /></GalleryArrow>
                <GalleryArrow><Tri dir="down" c="#bbb" /></GalleryArrow>
              </GalleryArrows>
            </Gallery>
          </GroupBody>
          <GroupLabel>Style</GroupLabel>
        </Group>

        <Group $w={155}>
          <GroupBody>
            <BigBtn $w={50}>
              <BigIcon><CellInsert /></BigIcon>
              <span>Insérer</span>
              <BigCaret />
            </BigBtn>
            <BigBtn $w={52}>
              <BigIcon><CellDelete /></BigIcon>
              <span>Supprimer</span>
              <BigCaret />
            </BigBtn>
            <BigBtn $w={52}>
              <BigIcon><CellFormat /></BigIcon>
              <span>Format</span>
              <BigCaret />
            </BigBtn>
          </GroupBody>
          <GroupLabel>Cellules</GroupLabel>
        </Group>

        <Group $w={282}>
          <GroupBody>
            <SmallCol $w={155} $pl={6}>
              <SmallBtn $on><SmallIcon><Sigma /></SmallIcon>Somme automatique<Caret $ml={10} $c="#666" /></SmallBtn>
              <SmallBtn><SmallIcon><FillDown /></SmallIcon>Remplissage<Caret /></SmallBtn>
              <SmallBtn $on><SmallIcon><Eraser /></SmallIcon>Effacer<Caret $c="#666" /></SmallBtn>
            </SmallCol>
            <BigBtn $w={46}>
              <BigIcon><SortFilter /></BigIcon>
              <span>Trier et</span>
              <span>filtrer<Caret /></span>
            </BigBtn>
            <BigBtn $w={76} $on>
              <BigIcon><Binoculars /></BigIcon>
              <span>Rechercher et</span>
              <span>sélectionner<Caret $c="#666" /></span>
            </BigBtn>
          </GroupBody>
          <GroupLabel>Édition</GroupLabel>
        </Group>
        <Collapse><Chevron up /></Collapse>
      </Ribbon>

      <FormulaBar>
        <NameBox>D8<Caret $ml={0} $c="#666" /></NameBox>
        <Grip><span /><span /><span /></Grip>
        <FxBox>
          <FxSlot><Svg w={12} h={12}><path d="M1 1l10 10M11 1L1 11" stroke="#c4c4c4" strokeWidth="1.8" /></Svg></FxSlot>
          <FxSlot><Svg w={13} h={12}><path d="M1 6l4 5 7-10" fill="none" stroke="#c4c4c4" strokeWidth="2" /></Svg></FxSlot>
          <FxMark>fx</FxMark>
        </FxBox>
        <FormulaInput>='C. Direction'!E15<Chevron /></FormulaInput>
      </FormulaBar>

      <SheetArea>
        <Grid>
          <Corner><Svg w={9} h={9}><path d="M9 0v9H0z" fill="#d6d6d6" /></Svg></Corner>
          {colNames.map((c, i) => <ColHead key={c} $col={i + 3} $sel={c === 'D'}>{c}</ColHead>)}
          {rowNames.map((n, i) => <RowHead key={n} $row={gridRow(i + 1)} $sel={n === 8} $tall={n === 1}>{n}</RowHead>)}

          <Banner $row={3} $first>LABOREX-SENEGAL</Banner>
          <Banner $row={4} $pt={3}>TOUTES AGENCES</Banner>
          <Banner $row={5} $pt={3} $shift={7}>AVANCE QUINZAINE</Banner>
          <Banner $row={6} />
          <Banner $row={7} $span={2} $small>Désignation</Banner>

          <LabelCell $row={9}>AGENCES</LabelCell>
          <ValueCell $row={9} $col={6}>Montant<br />Demandé</ValueCell>
          <ValueCell $row={9} $col={7}>Montant<br />Accordé</ValueCell>

          <LabelCell $row={10} $end={5} $ls={-0.3}>CENTRAL DIRI</LabelCell>
          <ValueCell $row={10} $col={6} />
          <ValueCell $row={10} $col={7} />

          {agencies.map((name, i) => (
            <React.Fragment key={name}>
              <LabelCell $row={11 + i}>{name}</LabelCell>
              <ValueCell $row={11 + i} $col={6} />
              <ValueCell $row={11 + i} $col={7} />
            </React.Fragment>
          ))}
          <LabelCell $row={16} $b={4} $pt={4}>TOTAL</LabelCell>
          <ValueCell $row={16} $col={6} $b={4} />
          <ValueCell $row={16} $col={7} $b={4} />

          <TextCell $row={13} $col={12} $pl={18} $gap={28} $low><span>0</span><span>4</span></TextCell>
          <TextCell $row={18} $col={3} $fs={15} $pt={6} $b>Le DRH</TextCell>
          <TextCell $row={18} $col={6} $fs={14.5} $pt={6} $b>D. A.F</TextCell>
          <TextCell $row={21} $col={3} $fs={12.5}>Contrôle</TextCell>
          <TextCell $row={22} $col={3} $fs={12.5}>ECART</TextCell>
        </Grid>
        <VScroll>
          <ScrollBtn><Tri dir="up" c="#666" s={4} /></ScrollBtn>
          <VThumb />
          <VTrough />
          <ScrollBtn><Tri dir="down" c="#666" s={4} /></ScrollBtn>
        </VScroll>

        <FreezeLine />
        <EditBox>='C. Direction'!E15</EditBox>

        <OutlineBtn $x={43} $y={11} $w={15} $h={15}>1</OutlineBtn>
        <OutlineBtn $x={43} $y={27} $w={15} $h={15}>2</OutlineBtn>
        <OutlineBtn $x={2} $y={47} $w={15} $h={15}>1</OutlineBtn>
        <OutlineBtn $x={17} $y={47} $w={16} $h={15}>2</OutlineBtn>
        <OutlineBar $x={332} $y={16} $w={397} $h={2} />
        <OutlineBar $x={332} $y={16} $w={2} $h={5} />
        <OutlineBtn $x={729} $y={11}>
          <Svg w={8} h={2}><rect width="8" height="2" fill="#444" /></Svg>
        </OutlineBtn>
        <OutlineDot $x={422} $y={33} />
        <OutlineDot $x={605} $y={33} />
        <OutlineBar $x={8} $y={447} $w={2} $h={72} />
        <OutlineBar $x={8} $y={447} $w={5} $h={2} />
        <OutlineDot $x={23} $y={471} />
        <OutlineBtn $x={2} $y={518}>
          <Svg w={8} h={2}><rect width="8" height="2" fill="#444" /></Svg>
        </OutlineBtn>
        <OutlineBtn $x={2} $y={782}>
          <Svg w={10} h={10}><path d="M5 0v10M0 5h10" stroke="#444" strokeWidth="2" /></Svg>
        </OutlineBtn>
      </SheetArea>

      <TabsRow>
        <TabNav>
          <TriSide left c="#c4c4c4" />
          <TriSide c="#c4c4c4" />
        </TabNav>
        <LeadSep />
        <SheetTab $w={92} $ml={2} $navy="#243f64" $pr={2}>C. Direction</SheetTab>
        <SheetTab $w={90} $ml={4} $navy="#243f64" $pr={6} $ls={-0.3}>C.CLIENTS</SheetTab>
        <LeadSep $ml={2} />
        <SheetTab $w={82} $sep>KAOLACK</SheetTab>
        <SheetTab $w={102} $sep>SAINT LOUIS</SheetTab>
        <SheetTab $w={100} $ml={2} $navy="#1f4a7d">ZIGUINCHOR</SheetTab>
        <LeadSep $ml={2} />
        <SheetTab $w={61}>THIES</SheetTab>
        <ActiveTab>RECAPITULATIF</ActiveTab>
        <SheetTab $w={61} $sep>Feuil3</SheetTab>
        <SheetTab $w={61} $sep>Feuil2</SheetTab>
        <SheetTab $w={60} $sep>Feuil1</SheetTab>
        <PlusSlot><PlusCircle /></PlusSlot>
        <HScroll>
          <HDots><span /><span /><span /></HDots>
          <HBtn><TriSide left /></HBtn>
          <HThumb />
          <HTrough />
          <HBtn><TriSide /></HBtn>
        </HScroll>
      </TabsRow>

      <StatusBar>
        PRÊT
        <StatusRight>
          <ViewBtn $on><ViewIcon kind="grid" /></ViewBtn>
          <ViewBtn><ViewIcon kind="page" /></ViewBtn>
          <ViewBtn $mr={4}><ViewIcon kind="break" /></ViewBtn>
          <ZoomSign $w={8}><Svg w={6} h={2}><rect width="6" height="2" fill="#fff" /></Svg></ZoomSign>
          <ZoomTrack><ZoomKnob /></ZoomTrack>
          <ZoomSign $w={10}><Svg w={8} h={8}><path d="M4 0v8M0 4h8" stroke="#fff" strokeWidth="2" /></Svg></ZoomSign>
          <ZoomValue>100 %</ZoomValue>
        </StatusRight>
      </StatusBar>

      <Taskbar>
        <OrbSlot><Orb /></OrbSlot>
        <TaskBtn $w={50} $mr={8} $on><Folder /></TaskBtn>
        <TaskBtn $w={62} $mr={4}><MediaPlay /></TaskBtn>
        <TaskBtn $on><Outlook /></TaskBtn>
        <TaskBtn><Stopwatch /></TaskBtn>
        <TaskBtn $on><Chrome /></TaskBtn>
        <TaskBtn $on><Acrobat /></TaskBtn>
        <TaskBtn $on><Lync /></TaskBtn>
        <TaskBtn $on><Skype /></TaskBtn>
        <TaskBtn $w={50} $on $front><XlLogo w={30} h={28} /></TaskBtn>
        <Tray>
          <TrayText>FR</TrayText>
          <TraySlot $w={26}><Tri dir="up" c="#fff" s={4} /></TraySlot>
          <TraySlot><SpeakerIcon /></TraySlot>
          <TraySlot><FlagIcon /></TraySlot>
          <TraySlot><NetIcon /></TraySlot>
          <TrayClock>13:55<br />26/02/2021</TrayClock>
          <ShowDesk />
        </Tray>
      </Taskbar>

      <Dialog>
        <DialogTitle>Microsoft Excel</DialogTitle>
        <CloseBtn>
          <Svg w={12} h={10}><path d="M2 1l8 8M10 1l-8 8" stroke="#fff" strokeWidth="2.6" /></Svg>
        </CloseBtn>
        <DialogPanel>
          <Message>
            <ErrorBadge />
            <MsgText><span>Zone de formule</span><span>Ne pas Saisir</span></MsgText>
          </Message>
          <DialogButtons>
            <DlgBtn $main><span><u>R</u>éessayer</span></DlgBtn>
            <DlgBtn>Annuler</DlgBtn>
            <DlgBtn><span><u>A</u>ide</span></DlgBtn>
          </DialogButtons>
          <HelpLink>Ces informations vous ont-elles été utiles ?</HelpLink>
        </DialogPanel>
      </Dialog>
    </Page>
  )
}

export default App
